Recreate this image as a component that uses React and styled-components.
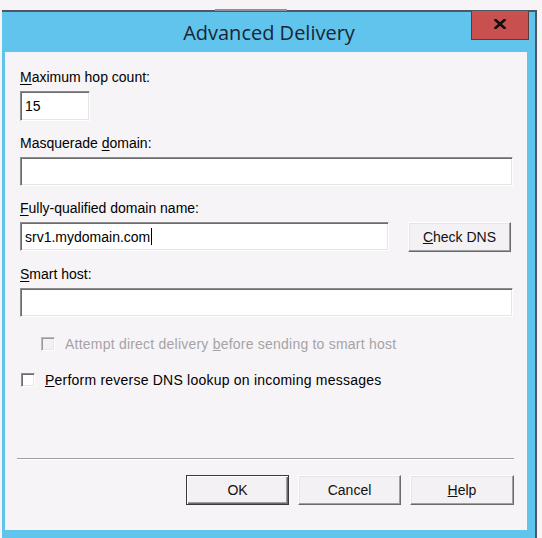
import React from "react";
import styled, { createGlobalStyle } from "styled-components";

const GlobalStyle = createGlobalStyle`
  html, body {
    margin: 0;
    padding: 0;
    background: #f6f4f7;
  }
  body {
    font-family: "Liberation Sans", Arial, sans-serif;
  }
`;

export default function App() {
  return (
    <>
      <GlobalStyle />
      <Page>
        <Window>
          <TitleBar>
            <Title>Advanced Delivery</Title>
            <CloseButton aria-label="Close">
              <svg width="12" height="10" viewBox="0 0 12 10">
                <path d="M1.5 1 L10.5 9 M10.5 1 L1.5 9" stroke="#111" strokeWidth="2.6" strokeLinecap="square" />
              </svg>
            </CloseButton>
          </TitleBar>

          <Client>
            <Field>
              <Label>
                <u>M</u>aximum hop count:
              </Label>
              <TextBox $w={70} $h={30}>15</TextBox>
            </Field>

            <Field>
              <Label>
                Masquerade <u>d</u>omain:
              </Label>
              <TextBox />
            </Field>

            <Field>
              <Label>
                <u>F</u>ully-qualified domain name:
              </Label>
              <Row>
                <TextBox $w={369}>
                  srv1.mydomain.com
                  <Caret />
                </TextBox>
                <PushButton $w={103}>
                  <u>C</u>heck DNS
                </PushButton>
              </Row>
            </Field>

            <Field>
              <Label>
                <u>S</u>mart host:
              </Label>
              <TextBox />
            </Field>

            <CheckRow $indent={21} $top={19} $disabled>
              <CheckBox $disabled />
              <span>
                Attempt direct delivery <u>b</u>efore sending to smart host
              </span>
            </CheckRow>

            <CheckRow $indent={1} $top={20}>
              <CheckBox />
              <span>
                <u>P</u>erform reverse DNS lookup on incoming messages
              </span>
            </CheckRow>

            <Footer>
              <Separator />
              <ButtonRow>
                <PushButton $w={103} $h={30} $default>
                  OK
                </PushButton>
                <PushButton $w={103} $h={30}>
                  Cancel
                </PushButton>
                <PushButton $w={104} $h={30}>
                  <u>H</u>elp
                </PushButton>
              </ButtonRow>
            </Footer>
          </Client>
        </Window>
      </Page>
    </>
  );
}

const Page = styled.div`
  height: 538px;
  box-sizing: border-box;
  padding: 10px 0 0 2px;
  overflow: hidden;
`;

const Window = styled.div`
  position: relative;
  width: 535px;
  height: 528px;
  box-sizing: border-box;
  border-top: 2px solid #4e5864;
  border-right: 2px solid #4e5864;
  background: #60c4ec;
  padding: 0 8px 8px 3px;
  display: flex;
  flex-direction: column;

  &::before {
    content: "";
    position: absolute;
    top: -3px;
    left: 213px;
    width: 72px;
    height: 2px;
    background: #8d9098;
  }
`;

const TitleBar = styled.div`
  position: relative;
  height: 40px;
  display: flex;
  align-items: center;
  justify-content: center;
`;

const Title = styled.div`
  font-family: "Open Sans", "Noto Sans", sans-serif;
  font-size: 20px;
  color: #1c2433;
  padding-left: 6px;
`;

const CloseButton = styled.div`
  position: absolute;
  top: -1px;
  right: -2px;
  width: 58px;
  height: 29px;
  box-sizing: border-box;
  background: #c8514f;
  border: 1px solid #5a3b3e;
  border-top: none;
  display: flex;
  align-items: center;
  justify-content: center;
  padding-bottom: 2px;
`;

const Client = styled.div`
  flex: 1;
  background: #f7f4f7;
  display: flex;
  flex-direction: column;
  box-sizing: border-box;
  padding: 17px 14px 25px 15px;
  font-size: 14px;
  color: #000;
`;

const Field = styled.div`
  display: flex;
  flex-direction: column;
  align-items: flex-start;

  & + & {
    margin-top: 14px;
  }
`;

const Label = styled.div`
  line-height: 16px;
  margin-bottom: 6px;

  u {
    text-underline-offset: 2px;
  }
`;

const TextBox = styled.div`
  width: ${(p) => (p.$w ? `${p.$w}px` : "100%")};
  height: ${(p) => p.$h || 29}px;
  box-sizing: border-box;
  background: #fff;
  border: 1px solid;
  border-color: #8c8c8c #ffffff #ffffff #8c8c8c;
  box-shadow: inset 1px 1px 0 #6c6c6c, inset -1px -1px 0 #e6e6e6;
  padding: 0 4px;
  display: flex;
  align-items: center;
  line-height: 16px;
  white-space: nowrap;
`;

const Caret = styled.span`
  display: inline-block;
  width: 1px;
  height: 17px;
  background: #000;
  margin-left: 1px;
`;

const Row = styled.div`
  display: flex;
  align-items: flex-start;
  gap: 19px;
  width: 100%;
`;

const PushButton = styled.div`
  width: ${(p) => p.$w}px;
  height: ${(p) => p.$h || 30}px;
  box-sizing: border-box;
  background: #f4f1f4;
  border: 1px solid;
  border-color: ${(p) => (p.$default ? "#3a3a3a" : "#ffffff #6a6a6a #6a6a6a #ffffff")};
  box-shadow: ${(p) =>
    p.$default
      ? "inset 1px 1px 0 #ffffff, inset -1px -1px 0 #6a6a6a, inset -2px -2px 0 #a0a0a0"
      : "inset -1px -1px 0 #a0a0a0, inset 1px 1px 0 #e6e4e7"};
  display: flex;
  align-items: center;
  justify-content: center;
  line-height: 16px;
  color: #111;
  flex-shrink: 0;
`;

const CheckRow = styled.div`
  display: flex;
  align-items: center;
  gap: 10px;
  height: 16px;
  margin-left: ${(p) => p.$indent}px;
  margin-top: ${(p) => p.$top}px;
  color: ${(p) => (p.$disabled ? "#a5a3a6" : "#000")};
  letter-spacing: 0.22px;
  white-space: nowrap;
`;

const CheckBox = styled.span`
  width: 14px;
  height: 14px;
  box-sizing: border-box;
  flex-shrink: 0;
  background: ${(p) => (p.$disabled ? "#f3f1f4" : "#ffffff")};
  border: 1px solid;
  border-color: ${(p) =>
    p.$disabled ? "#b8b8b8 #ffffff #ffffff #b8b8b8" : "#8c8c8c #ffffff #ffffff #8c8c8c"};
  box-shadow: ${(p) =>
    p.$disabled
      ? "inset 1px 1px 0 #9a9a9a, inset -1px -1px 0 #e6e6e6"
      : "inset 1px 1px 0 #6c6c6c, inset -1px -1px 0 #e6e6e6"};
`;

const Footer = styled.div`
  margin-top: auto;
  display: flex;
  flex-direction: column;
`;

const Separator = styled.div`
  height: 0;
  border-top: 1px solid #a0a0a0;
  border-bottom: 1px solid #ffffff;
  margin: 0 -1px 15px -3px;
`;

const ButtonRow = styled.div`
  display: flex;
  justify-content: flex-end;
  gap: 9px;
  margin-right: -1px;
`;
